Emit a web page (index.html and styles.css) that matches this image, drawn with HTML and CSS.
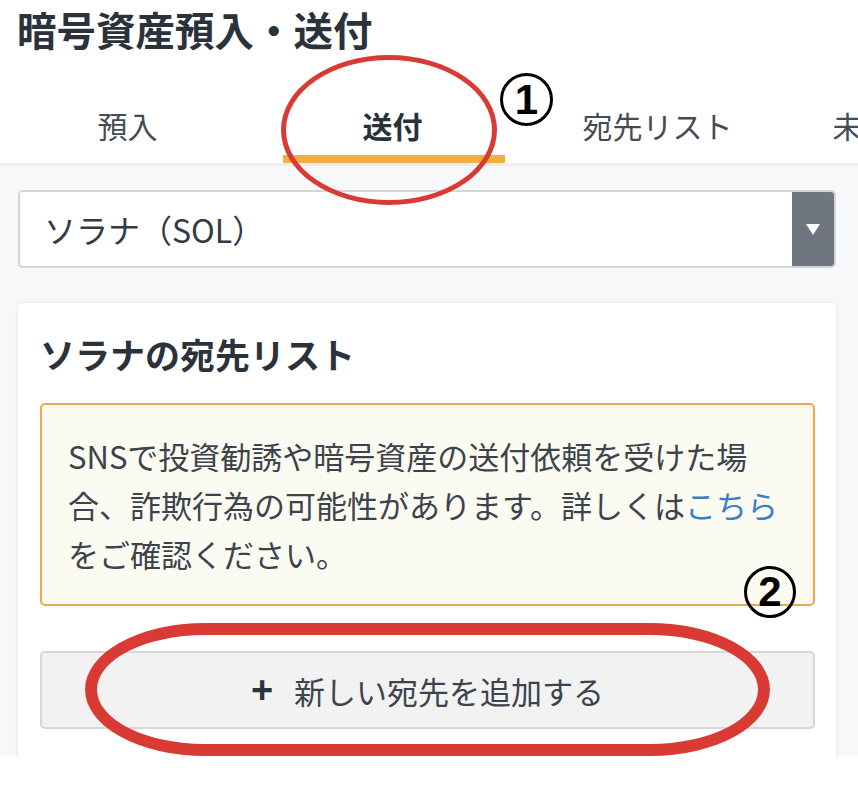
FILE: index.html
```html
<!DOCTYPE html>
<html lang="ja">
<head>
<meta charset="utf-8">
<title>暗号資産預入・送付</title>
<link rel="stylesheet" href="styles.css">
</head>
<body>
<div class="screen">
  <header class="header">
    <h1 class="page-title">暗号資産預入・送付</h1>
    <nav class="tabs">
      <div class="tab"><span class="tab-label">預入</span><span class="tab-bar"></span></div>
      <div class="tab tab-active"><span class="tab-label">送付</span><span class="tab-bar"></span></div>
      <div class="tab"><span class="tab-label">宛先リスト</span><span class="tab-bar"></span></div>
      <div class="tab"><span class="tab-label">未着金の確認</span><span class="tab-bar"></span></div>
    </nav>
  </header>
  <main class="content">
    <div class="select">
      <span class="select-value">ソラナ（SOL）</span>
      <span class="select-arrow"><svg width="16" height="13" viewBox="0 0 16 13"><path d="M1 1 L15 1 L8 12 Z" fill="#fff"/></svg></span>
    </div>
    <section class="card">
      <h2 class="card-title">ソラナの宛先リスト</h2>
      <div class="notice">SNSで投資勧誘や暗号資産の送付依頼を受けた場合、詐欺行為の可能性があります。詳しくは<a class="notice-link" href="#">こちら</a>をご確認ください。</div>
      <button class="add-button"><span class="plus">+</span>新しい宛先を追加する</button>
    </section>
  </main>
  <div class="mark mark-ellipse-1"></div>
  <div class="mark mark-ellipse-2"></div>
  <div class="mark mark-num mark-num-1">1</div>
  <div class="mark mark-num mark-num-2">2</div>
</div>
</body>
</html>
```

FILE: styles.css
```css
html, body {
  margin: 0;
  padding: 0;
  background: #ffffff;
}
body {
  width: 858px;
  height: 790px;
  overflow: hidden;
  font-family: "Noto Sans CJK JP", "Noto Sans", sans-serif;
  color: #353b44;
}
.screen {
  position: relative;
  height: 757px;
  overflow: hidden;
  background: #f7f8fa;
}
.header {
  background: #ffffff;
}
.page-title {
  margin: 0;
  padding-left: 17px;
  font-size: 39.5px;
  line-height: 58px;
  font-weight: 700;
  color: #2c323b;
  white-space: nowrap;
}
.tabs {
  display: flex;
  margin-left: -5px;
  height: 105px;
  border-bottom: 3px solid #eceef1;
  overflow: hidden;
}
.tab {
  flex: 0 0 265px;
  display: flex;
  flex-direction: column;
  align-items: center;
}
.tab-label {
  margin-top: 47px;
  font-size: 30px;
  line-height: 40px;
  color: #454b54;
  white-space: nowrap;
}
.tab-bar {
  margin-top: auto;
  height: 8px;
  align-self: stretch;
  margin-left: 23px;
  margin-right: 20px;
}
.tab-active .tab-label {
  font-weight: 700;
  color: #2b313a;
}
.tab-active .tab-bar {
  background: #f0af40;
}
.content {
  padding: 24px 22px 0 18px;
}
.select {
  display: flex;
  height: 78px;
  box-sizing: border-box;
  border: 2px solid #d3d5d8;
  border-radius: 5px;
  background: #ffffff;
  overflow: hidden;
}
.select-value {
  flex: 1;
  padding-left: 24px;
  font-size: 32px;
  line-height: 74px;
  color: #343a43;
}
.select-arrow {
  flex: 0 0 42px;
  display: flex;
  align-items: center;
  justify-content: center;
  background: #6f7680;
}
.card {
  margin-top: 35px;
  padding: 27px 21px 40px 22px;
  background: #ffffff;
  border-radius: 5px;
  box-shadow: 0 0 4px rgba(0, 0, 0, 0.08);
}
.card-title {
  margin: 0;
  font-size: 35px;
  line-height: 48px;
  font-weight: 700;
  color: #2c323b;
}
.notice {
  margin-top: 25px;
  padding: 26px 24px 26px 26px;
  border: 2px solid #e9aa4b;
  border-radius: 5px;
  background: #fcfbf1;
  font-size: 31px;
  line-height: 49px;
  color: #3d434c;
}
.notice-link {
  color: #3b80c3;
  text-decoration: none;
}
.add-button {
  display: flex;
  align-items: center;
  justify-content: center;
  width: 100%;
  height: 78px;
  margin-top: 45px;
  border: 2px solid #d6d7d9;
  border-radius: 5px;
  background: #f2f2f3;
  font-family: inherit;
  font-size: 31px;
  color: #3d434c;
  padding: 0;
}
.plus {
  font-family: "Liberation Sans", sans-serif;
  font-weight: 700;
  font-size: 38px;
  margin-right: 21px;
  color: #2c323b;
}
.mark {
  position: absolute;
  box-sizing: border-box;
  pointer-events: none;
}
.mark-ellipse-1 {
  left: 281px;
  top: 55px;
  width: 216px;
  height: 150px;
  border: 5px solid #d93a34;
  border-radius: 50%;
}
.mark-ellipse-2 {
  left: 85px;
  top: 623px;
  width: 685px;
  height: 133px;
  border: 12px solid #d93a34;
  border-radius: 120px / 50%;
}
.mark-num {
  width: 53px;
  height: 53px;
  border: 3px solid #000000;
  border-radius: 50%;
  background: transparent;
  display: flex;
  align-items: center;
  justify-content: center;
  font-family: "Liberation Sans", sans-serif;
  font-weight: 700;
  font-size: 42px;
  line-height: 1;
  color: #000000;
}
.mark-num-1 {
  left: 500px;
  top: 73px;
}
.mark-num-2 {
  left: 744px;
  top: 566px;
  width: 52px;
  height: 52px;
}
```
